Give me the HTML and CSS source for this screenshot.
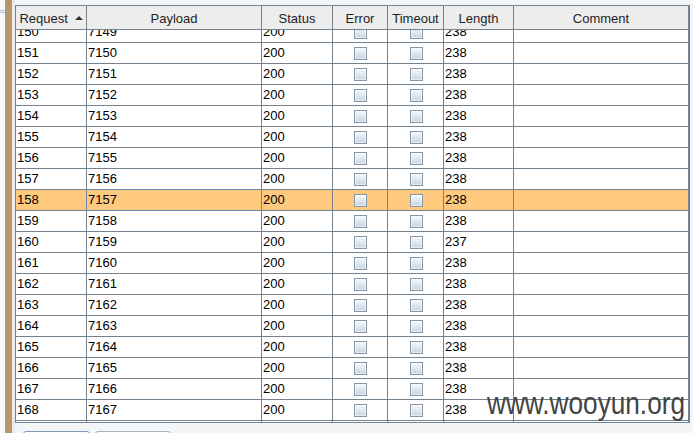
FILE: index.html
```html
<!DOCTYPE html>
<html lang="en">
<head>
  <meta charset="UTF-8" />
  <title>Intruder results</title>
  <link rel="stylesheet" href="styles.css">
</head>
<body>

  <div class="window">
    <div class="edge"><div class="grip"></div></div>
    <div class="divider"></div>
    <div class="gutter"></div>

    <div class="pane">
      <div class="results">
        <div class="row head">
          <span class="c">Request <i class="sort"></i></span>
          <span class="c">Payload</span>
          <span class="c">Status</span>
          <span class="c">Error</span>
          <span class="c">Timeout</span>
          <span class="c">Length</span>
          <span class="c">Comment</span>
        </div>

        <div class="body">
          <div class="rows">
            <div class="row"><span class="c">150</span><span class="c">7149</span><span class="c">200</span><span class="c chk"><i class="box"></i></span><span class="c chk"><i class="box"></i></span><span class="c">238</span><span class="c"></span></div>
            <div class="row"><span class="c">151</span><span class="c">7150</span><span class="c">200</span><span class="c chk"><i class="box"></i></span><span class="c chk"><i class="box"></i></span><span class="c">238</span><span class="c"></span></div>
            <div class="row"><span class="c">152</span><span class="c">7151</span><span class="c">200</span><span class="c chk"><i class="box"></i></span><span class="c chk"><i class="box"></i></span><span class="c">238</span><span class="c"></span></div>
            <div class="row"><span class="c">153</span><span class="c">7152</span><span class="c">200</span><span class="c chk"><i class="box"></i></span><span class="c chk"><i class="box"></i></span><span class="c">238</span><span class="c"></span></div>
            <div class="row"><span class="c">154</span><span class="c">7153</span><span class="c">200</span><span class="c chk"><i class="box"></i></span><span class="c chk"><i class="box"></i></span><span class="c">238</span><span class="c"></span></div>
            <div class="row"><span class="c">155</span><span class="c">7154</span><span class="c">200</span><span class="c chk"><i class="box"></i></span><span class="c chk"><i class="box"></i></span><span class="c">238</span><span class="c"></span></div>
            <div class="row"><span class="c">156</span><span class="c">7155</span><span class="c">200</span><span class="c chk"><i class="box"></i></span><span class="c chk"><i class="box"></i></span><span class="c">238</span><span class="c"></span></div>
            <div class="row"><span class="c">157</span><span class="c">7156</span><span class="c">200</span><span class="c chk"><i class="box"></i></span><span class="c chk"><i class="box"></i></span><span class="c">238</span><span class="c"></span></div>
            <div class="row sel"><span class="c">158</span><span class="c focus">7157</span><span class="c">200</span><span class="c chk"><i class="box"></i></span><span class="c chk"><i class="box"></i></span><span class="c">238</span><span class="c"></span></div>
            <div class="row"><span class="c">159</span><span class="c">7158</span><span class="c">200</span><span class="c chk"><i class="box"></i></span><span class="c chk"><i class="box"></i></span><span class="c">238</span><span class="c"></span></div>
            <div class="row"><span class="c">160</span><span class="c">7159</span><span class="c">200</span><span class="c chk"><i class="box"></i></span><span class="c chk"><i class="box"></i></span><span class="c">237</span><span class="c"></span></div>
            <div class="row"><span class="c">161</span><span class="c">7160</span><span class="c">200</span><span class="c chk"><i class="box"></i></span><span class="c chk"><i class="box"></i></span><span class="c">238</span><span class="c"></span></div>
            <div class="row"><span class="c">162</span><span class="c">7161</span><span class="c">200</span><span class="c chk"><i class="box"></i></span><span class="c chk"><i class="box"></i></span><span class="c">238</span><span class="c"></span></div>
            <div class="row"><span class="c">163</span><span class="c">7162</span><span class="c">200</span><span class="c chk"><i class="box"></i></span><span class="c chk"><i class="box"></i></span><span class="c">238</span><span class="c"></span></div>
            <div class="row"><span class="c">164</span><span class="c">7163</span><span class="c">200</span><span class="c chk"><i class="box"></i></span><span class="c chk"><i class="box"></i></span><span class="c">238</span><span class="c"></span></div>
            <div class="row"><span class="c">165</span><span class="c">7164</span><span class="c">200</span><span class="c chk"><i class="box"></i></span><span class="c chk"><i class="box"></i></span><span class="c">238</span><span class="c"></span></div>
            <div class="row"><span class="c">166</span><span class="c">7165</span><span class="c">200</span><span class="c chk"><i class="box"></i></span><span class="c chk"><i class="box"></i></span><span class="c">238</span><span class="c"></span></div>
            <div class="row"><span class="c">167</span><span class="c">7166</span><span class="c">200</span><span class="c chk"><i class="box"></i></span><span class="c chk"><i class="box"></i></span><span class="c">238</span><span class="c"></span></div>
            <div class="row"><span class="c">168</span><span class="c">7167</span><span class="c">200</span><span class="c chk"><i class="box"></i></span><span class="c chk"><i class="box"></i></span><span class="c">238</span><span class="c"></span></div>
            <div class="row"><span class="c">169</span><span class="c">7168</span><span class="c">200</span><span class="c chk"><i class="box"></i></span><span class="c chk"><i class="box"></i></span><span class="c">238</span><span class="c"></span></div>
          </div>
        </div>
      </div>

      <div class="footer">
        <span class="btn first"></span>
        <span class="btn second"></span>
      </div>
    </div>

    <div class="watermark">www.wooyun.org</div>
  </div>

</body>
</html>
```

FILE: styles.css
```css
body {
  margin: 0;
  overflow: hidden;
  font-family: 'Liberation Sans', Arial, sans-serif;
  font-size: 13px;
  background-color: #f0f0f0;
}

.window {
  position: relative;
  display: flex;
  width: 693px;
  height: 433px;
  overflow: hidden;
}

.edge {
  width: 5px;
  background-color: #f6f7f9;
}

.grip {
  margin-top: 10px;
  height: 1px;
  border-top: 1px solid #b4c7de;
  border-bottom: 1px solid #b4c7de;
  background-color: #e6edf6;
}

.divider {
  width: 7px;
  background-color: #b9966a;
}

.gutter {
  width: 3px;
  background-color: #ebebeb;
}

.pane {
  flex: 1;
  display: flex;
  flex-direction: column;
  padding: 5px 3px 0 0;
  background-color: #f4f5f7;
  overflow: hidden;
}

.results {
  flex-shrink: 0;
  height: 418px;
  box-sizing: border-box;
  border: 1px solid #74818f;
  background: white;
  overflow: hidden;
}

.row {
  display: grid;
  grid-template-columns: 71px 175px 71px 55px 56px 70px 175px;
  height: 21px;
  box-sizing: border-box;
  border-bottom: 1px solid #74818f;
}

.c {
  position: relative;
  box-sizing: border-box;
  border-right: 1px solid #74818f;
  padding-left: 1px;
  line-height: 20px;
  color: black;
  white-space: nowrap;
  overflow: hidden;
}

.head {
  height: 24px;
  background-color: #ededed;
}

.head .c {
  padding: 2px 0 0;
  line-height: 21px;
  text-align: center;
  color: #1e1e1e;
}

.sort {
  display: inline-block;
  width: 0;
  height: 0;
  margin-left: 3px;
  vertical-align: 3px;
  border-left: 4px solid transparent;
  border-right: 4px solid transparent;
  border-bottom: 4px solid #333;
}

.body {
  height: 392px;
  overflow: hidden;
}

.rows {
  margin-top: -8px;
}

.sel {
  background-color: #ffc97e;
}

.focus {
  overflow: visible;
}

.focus::after {
  content: '';
  position: absolute;
  top: -1px;
  left: -1px;
  right: -1px;
  bottom: -1px;
  border: 1px solid #6e85aa;
}

.chk {
  display: flex;
  align-items: center;
  justify-content: center;
}

.box {
  display: block;
  width: 13px;
  height: 13px;
  box-sizing: border-box;
  border: 1px solid #8595a8;
  background: linear-gradient(#f7f9fb, #c9d4e0);
  box-shadow: inset 0 0 0 1px rgba(255,255,255,0.55);
}

.footer {
  flex-shrink: 0;
  display: flex;
  gap: 5px;
  padding: 8px 0 0 8px;
}

.btn {
  height: 22px;
  border: 1px solid #a7b1bd;
  border-radius: 3px;
  background: linear-gradient(#fbfbfb, #e6e6e6);
}

.btn.first {
  width: 65px;
  border-color: #7c9bc0;
}

.btn.second {
  width: 74px;
}

.watermark {
  position: absolute;
  left: 487px;
  top: 388px;
  font-size: 31px;
  line-height: 31px;
  color: #444;
  transform: scaleX(0.845);
  transform-origin: left top;
  white-space: nowrap;
}
```
